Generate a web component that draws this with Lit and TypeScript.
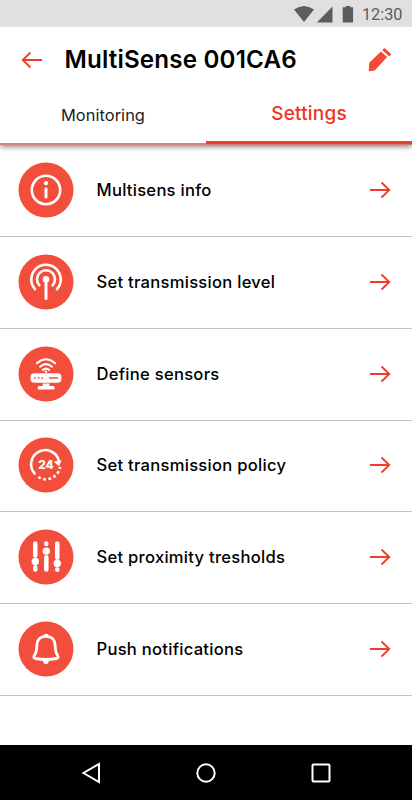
import { LitElement, html, svg, css } from "lit";
import { customElement } from "lit/decorators.js";

const icons = {
  info: svg`<circle class="line" cx="28" cy="28" r="14.2"/><circle class="solid" cx="28" cy="21.2" r="2.1"/><path class="line thick" d="M28 26.800v8.200"/>`,
  antenna: svg`<circle class="solid" cx="28" cy="25.4" r="3.3"/><path class="line thick" d="M28 26v18.500"/>
    <path class="line" d="M17 35.200A14.700 14.700 0 1 1 39 35.200M21.400 31.400A9 9 0 1 1 34.600 31.400"/>`,
  sensor: svg`<path class="line fine" d="M18.800 17.300Q28 9.300 37.200 17.300M22 20.700Q28 15.500 34 20.700M24.800 23.900Q28 21.300 31.200 23.900"/>
    <circle class="solid" cx="28" cy="25.600" r="1.200"/><rect class="solid" x="12.500" y="27.200" width="31" height="9.600" rx="4"/>
    <path class="cut" d="M16 32h1.600M19.800 32h1.600M23.400 32h1.600M31 32h9"/>
    <path class="solid" d="M24.800 37.600h6.600v2.400h3.800q1.400 0 1.400 1.600v2H19.800v-2q0-1.600 1.400-1.600h3.600z"/>`,
  policy: svg`<path class="line" d="M16.600 36.500A14.100 14.100 0 1 1 40.800 23.500"/><path class="solid" d="M35.800 24.600L43.600 23.600L41 29.400z"/>
    <path class="line dash" d="M20.400 40A14.100 14.100 0 0 0 42 30"/>
    <text x="28" y="32.200" text-anchor="middle" textLength="15.500" lengthAdjust="spacingAndGlyphs">24</text>`,
  sliders: svg`<path class="line track" d="M17.300 14.600v12M17.300 38.300v2.300M28.300 14.600v.4M28.300 28.200v12.400M39.300 14.600v14.200M39.300 40.400v.3"/>
    <circle class="solid" cx="17.300" cy="32.400" r="3.700"/><circle class="solid" cx="28.300" cy="22.100" r="3.700"/><circle class="solid" cx="39.300" cy="34.500" r="3.700"/>`,
  bell: svg`<path class="line bell" d="M28 15.400c-6 0-9.200 4-9.200 9.200 0 6-.5 7.500-2.500 10-1 1.700-.3 2.700 1.200 2.900q10.500 2 21 0c1.500-.2 2.200-1.200 1.200-2.900-2-2.500-2.500-4-2.500-10 0-5.200-3.200-9.200-9.200-9.200z"/>
    <path class="solid" d="M25.200 15q.5-2.200 2.800-2.200t2.800 2.200zM24.800 39h6.400q-.6 4.200-3.200 4.200t-3.200-4.200z"/>`,
};

const rows: [string, unknown][] = [
  ["Multisens info", icons.info],
  ["Set transmission level", icons.antenna],
  ["Define sensors", icons.sensor],
  ["Set transmission policy", icons.policy],
  ["Set proximity tresholds", icons.sliders],
  ["Push notifications", icons.bell],
];

@customElement("app-root")
export class AppRoot extends LitElement {
  static styles = css`
    :host { display: flex; flex-direction: column; height: 800px; width: 412px; background: #fff; color: #000; font-family: Inter, "Liberation Sans", sans-serif; overflow: hidden; }
    svg { display: block; flex: none; }
    .status { height: 27px; flex: none; background: #e0e0e0; display: flex; justify-content: flex-end; align-items: center; box-sizing: border-box; padding-right: 9.500px; font: 16.300px/27px Roboto, sans-serif; color: #5c5c5c; }
    .status svg { margin-right: 7.500px; }
    .time { padding-top: 1px; }
    .bar { height: 65px; flex: none; display: flex; align-items: center; padding: 0 20px 0 21px; }
    .title { flex: 1; margin: 0 0 0 21.500px; font-size: 24.200px; font-weight: 600; letter-spacing: .16px; line-height: 30px; white-space: nowrap; }
    .arrow { fill: none; stroke: #f23c28; stroke-width: 1.800; }
    .tabs { height: 53px; flex: none; display: flex; align-items: flex-start; box-shadow: 0 1px 6px rgba(0,0,0,.6); clip-path: inset(0 0 -14px 0); position: relative; background: #fff; }
    .tab { flex: 1; height: 53px; box-sizing: border-box; text-align: center; border-bottom: 2px solid #d58883; font-size: 16.400px; line-height: 47px; letter-spacing: .05px; color: #222; }
    .tab.on { height: 52px; border-bottom: 3px solid #ed4130; box-shadow: 0 1px #cc7c74; font-size: 19px; font-weight: 500; line-height: 43px; letter-spacing: .2px; color: #f13523; }
    .list { padding-top: .3px; flex: 1; }
    .row { height: 91.750px; box-sizing: border-box; border-bottom: 1px solid #c2c2c2; display: flex; align-items: center; padding: 0 21px 1px 18px; }
    .label { margin-left: 22.500px; font-size: 16.600px; font-weight: 500; letter-spacing: .26px; white-space: nowrap; }
    .row .arrow { margin-left: auto; }
    .disc { fill: #f34e3b; }
    .line { fill: none; stroke: #fff; stroke-width: 2.600; stroke-linecap: round; stroke-linejoin: round; }
    .thick { stroke-width: 3; }
    .fine { stroke-width: 2; }
    .track { stroke-width: 4.500; }
    .bell { stroke-width: 2.800; }
    .dash { stroke-linecap: butt; stroke-dasharray: 2.700 2.500; }
    .solid { fill: #fff; }
    .cut { stroke: #f34e3b; stroke-width: 1.300; }
    text { font: 800 11.500px Inter, sans-serif; fill: #fff; }
    .nav { height: 55px; flex: none; background: #000; display: flex; justify-content: space-between; align-items: center; padding: 0 81px 0 81px; }
    .nav path, .nav circle, .nav rect { fill: none; stroke: #fff; stroke-width: 2; }
  `;

  private arrow(left = false) {
    return html`<svg class="arrow" width="22" height="18" viewBox="0 0 22 18">
      <path d=${left ? "M21 9H1.500M9.500 1.500L1.700 9l7.800 7.500" : "M1 9h19.500M12.500 1.500L20.300 9l-7.800 7.500"} /></svg>`;
  }

  render() {
    return html`
      <div class="status">
        <svg width="60" height="18" viewBox="0 0 60 18" fill="#5c5c5c">
          <path d="M0 4.500Q10 -2.500 20 4.500L10 17z"/><path d="M38.500 1.500V17.500H22.800z"/>
          <path d="M48.700 2.200h3V1h4.400v1.200h3V17.500H48.700z"/>
        </svg><span class="time">12:30</span>
      </div>
      <div class="bar">${this.arrow(true)}<h1 class="title">MultiSense 001CA6</h1>
        <svg width="24" height="24" viewBox="0 0 24 24" fill="#f34a36"><path d="M.8 23.300L1.200 14.800 13 3.400l6.100 5.500L6.800 22.400zM14.200 2L15.800.6q.7-.5 1.400 0l5.600 5.200q.5.600 0 1.300L21.200 8.500z"/></svg>
      </div>
      <div class="tabs"><div class="tab">Monitoring</div><div class="tab on">Settings</div></div>
      <div class="list">
        ${rows.map(([label, icon]) => html`<div class="row">
          <svg width="56" height="56" viewBox="0 0 56 56"><circle class="disc" cx="28" cy="28" r="27.500"/>${icon}</svg>
          <span class="label">${label}</span>${this.arrow()}
        </div>`)}
      </div>
      <div class="nav">
        <svg width="20" height="22" viewBox="0 0 20 22"><path d="M18 2v18L2.500 11z"/></svg>
        <svg width="20" height="20" viewBox="0 0 20 20"><circle cx="10" cy="10" r="8.700"/></svg>
        <svg width="20" height="20" viewBox="0 0 20 20"><rect x="1.500" y="1.500" width="17" height="17" rx="1"/></svg>
      </div>`;
  }
}
